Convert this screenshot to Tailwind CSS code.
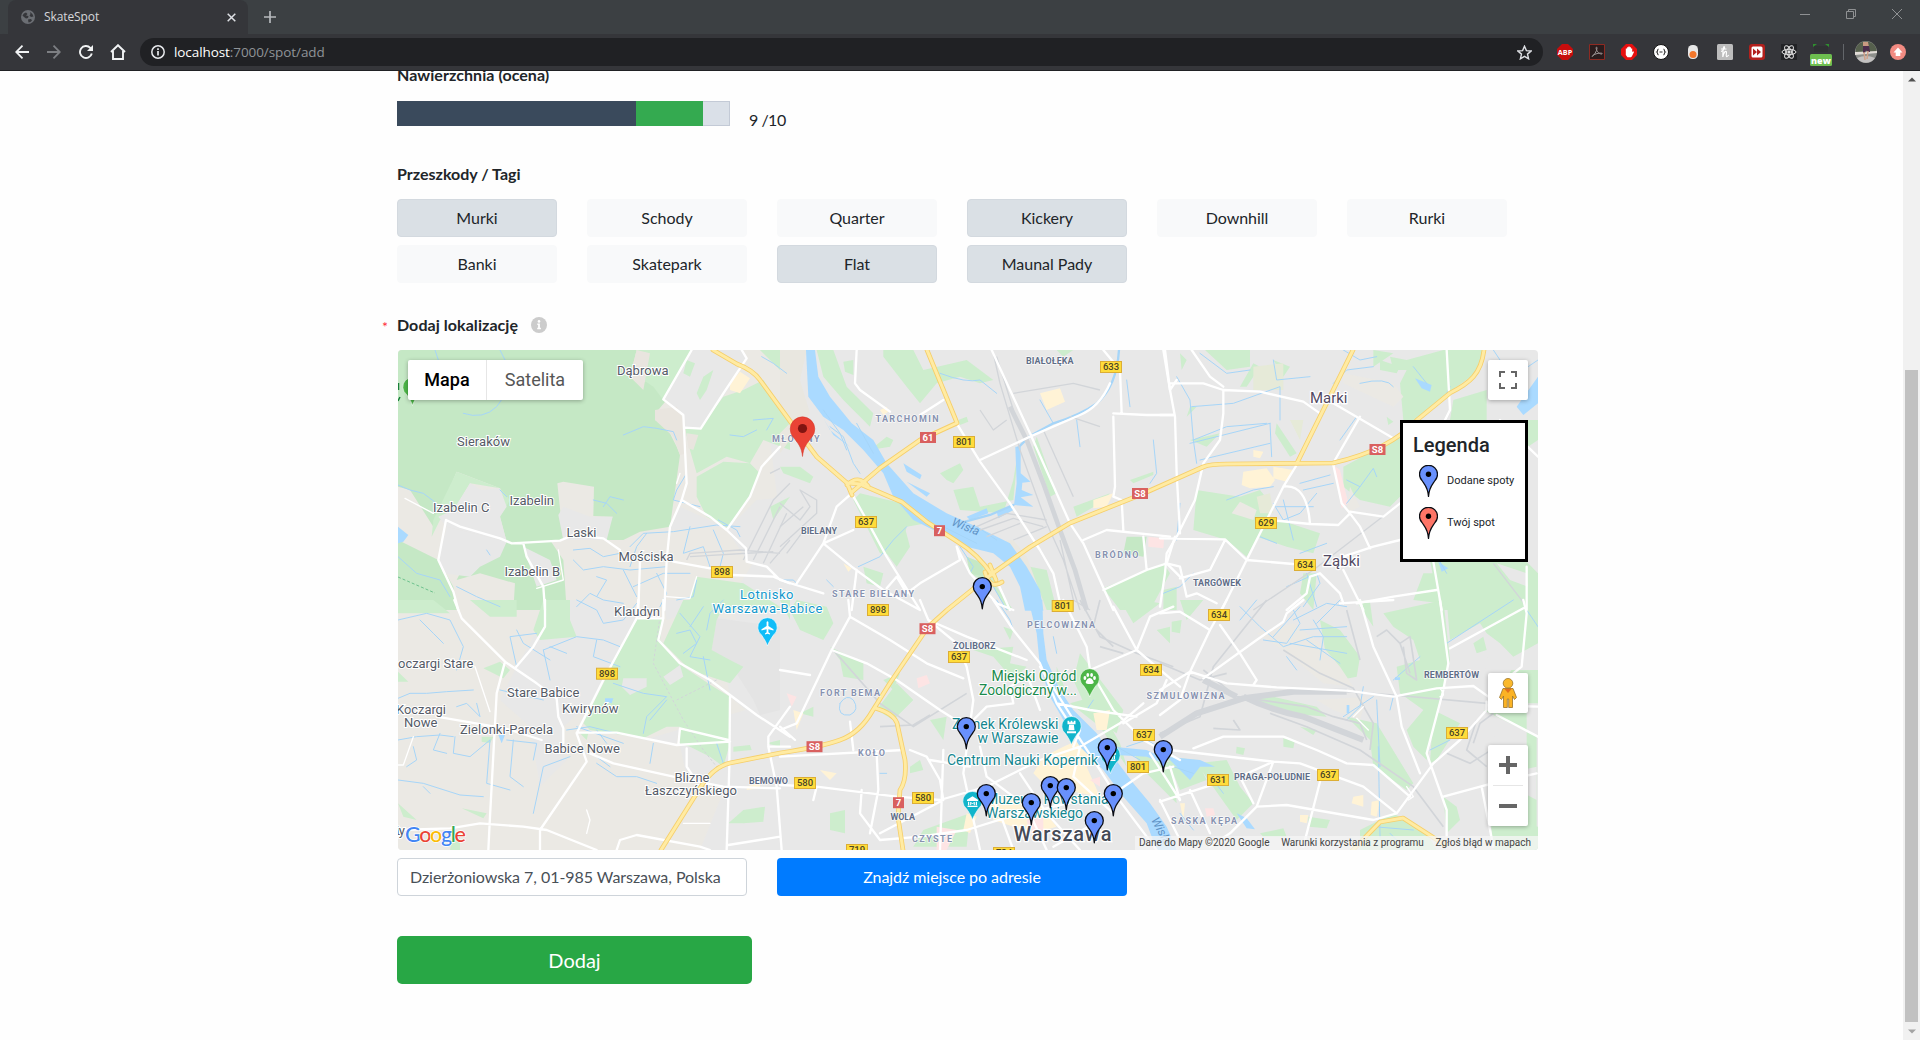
<!DOCTYPE html>
<html lang="pl">
<head>
<meta charset="utf-8">
<title>SkateSpot</title>
<script src="https://cdn.jsdelivr.net/npm/@tailwindcss/browser@4"></script>
</head>
<body class="flex h-[1040px] w-[1920px] flex-col overflow-hidden bg-[#fefefe] font-['Lato',sans-serif] text-base text-[#212529]">

<!-- Browser frame -->
<header class="flex h-[71px] shrink-0 flex-col border-b border-[#202124] bg-[#35363a] font-['Open_Sans',sans-serif]">
  <div class="flex h-[34px] items-stretch bg-[#3c4043]">
    <div class="w-2 rounded-br-md bg-[#3c4043]"></div>
    <div class="flex w-60 items-center rounded-t-lg bg-[#35363a] pl-[13px] pr-3">
      <svg class="size-[14px]" viewBox="0 0 14 14"><circle cx="7" cy="7" r="7" fill="#6b6e73"/><path d="M1.500 5.500Q2.500 3 5 2.500L6.500 4 5 5.500 7.500 6 7 8 5 8.500 3 7zM9 2q3 1.500 3.500 4.500L10 7 8.500 5.500 9.500 4zM7 9.500l3-.5 1 1.500Q9.500 12.500 7.500 12.500z" fill="#35363a"/></svg>
      <span class="ml-[9px] grow text-[12px] tracking-[-0.1px] text-[#d5d7da]">SkateSpot</span>
      <svg class="size-[9px]" viewBox="0 0 9 9"><path d="M.7.700l7.600 7.600M8.300.700L.7 8.300" stroke="#dfe1e5" stroke-width="1.500"/></svg>
    </div>
    <svg class="ml-4 size-3 self-center" viewBox="0 0 12 12"><path d="M6 0v12M0 6h12" stroke="#b6b9bd" stroke-width="1.700"/></svg>
    <div class="ml-auto flex items-start gap-[36px] pr-[18px] pt-[9px]">
      <svg class="size-[10px]" viewBox="0 0 10 10"><path d="M0 5.500h10" stroke="#8f9193"/></svg>
      <svg class="size-[10px]" viewBox="0 0 10 10" fill="none" stroke="#8f9193"><path d="M.5 2.500h7v7h-7zM2.500 2.500V.5h7v7h-2"/></svg>
      <svg class="size-[10px]" viewBox="0 0 10 10"><path d="M0 0l10 10M10 0L0 10" stroke="#8f9193"/></svg>
    </div>
  </div>
  <div class="flex h-9 items-center pl-[15px] pr-[14px]">
    <svg class="size-[14px]" viewBox="0 0 14 14" fill="none" stroke="#f1f3f4" stroke-width="1.800"><path d="M14 7H1.500M7.500.700L1.200 7l6.300 6.300"/></svg>
    <svg class="ml-[18px] size-[14px]" viewBox="0 0 14 14" fill="none" stroke="#7d7f83" stroke-width="1.800"><path d="M0 7h12.500M6.500.700L12.800 7l-6.300 6.300"/></svg>
    <svg class="ml-[18px] size-[14px]" viewBox="0 0 14 14"><path d="M12.800 8.500A6 6 0 1 1 11.300 2.800L12 3.500" fill="none" stroke="#f1f3f4" stroke-width="1.900"/><path d="M14 0v6H8z" fill="#f1f3f4"/></svg>
    <svg class="ml-[17px] size-4" viewBox="0 0 16 16" fill="none" stroke="#f1f3f4" stroke-width="1.900"><path d="M1 8l7-6.800L15 8M3 7v8h10V7"/></svg>
    <div class="ml-[14px] flex h-7 w-[1403px] items-center rounded-full bg-[#202124] pl-[11px] pr-[11px]">
      <svg class="size-[14px]" viewBox="0 0 14 14"><circle cx="7" cy="7" r="6.200" fill="none" stroke="#e8eaed" stroke-width="1.500"/><path d="M7 6v4.500M7 3.300v1.600" stroke="#e8eaed" stroke-width="1.700"/></svg>
      <span class="ml-[9px] grow text-[13.5px] tracking-[-0.08px] text-[#8f9397]"><span class="text-white">localhost</span>:7000/spot/add</span>
      <svg class="size-[15px]" viewBox="0 0 15 15"><path d="M7.500 1.200l1.900 4.400 4.700.4-3.600 3.100 1.100 4.700-4.100-2.500-4.100 2.500 1.100-4.700L.9 6l4.700-.4z" fill="none" stroke="#dfe1e5" stroke-width="1.400"/></svg>
    </div>
    <!-- Extensions -->
    <div class="ml-auto flex items-center gap-4">
      <svg class="size-4" viewBox="0 0 16 16"><path d="M5 0h6l5 5v6l-5 5H5l-5-5V5z" fill="#c70d0d"/><text x="8" y="10.700" text-anchor="middle" font-size="7.200" font-weight="700" fill="#fff">ABP</text></svg>
      <svg class="size-4" viewBox="0 0 16 16" fill="none"><path d="M.5.500h15v15H.5z" fill="#2a1c1d" stroke="#8e2a22"/><path d="M3 12.500c2-1 5-5.500 5-8.500 0-1.500-1.200-1-.8.800.7 3 3.300 5.500 5.800 5.200 1-.5-.5-1.200-3-.8-2.500.3-6 1.500-7 3.300z" stroke="#9b9494"/></svg>
      <svg class="size-4" viewBox="0 0 16 16"><path d="M5 0h6l5 5v6l-5 5H5l-5-5V5z" fill="#e60f0f"/><path d="M4.800 8V4.500h1.300V3.200h1.300v-.7h1.300v.7H10v1.200h1.200V8l1-.7.800.7-2.200 4.500-1 .8H6.500L4.800 11z" fill="#fff"/></svg>
      <svg class="size-4" viewBox="0 0 16 16"><circle cx="8" cy="8" r="7.500" fill="#fff" stroke="#111"/><path d="M5.500 5C4 5.500 5 7.500 3.800 8c1.200.5.200 2.500 1.700 3M10.500 5c1.500.500.500 2.500 1.700 3-1.200.5-.2 2.500-1.700 3M6.500 8h3" fill="none" stroke="#333" stroke-width="1.100"/></svg>
      <svg class="size-4" viewBox="0 0 16 16"><rect x="3" y="1" width="10" height="14" rx="4.500" fill="#e7e7e7"/><circle cx="8" cy="10.500" r="3.500" fill="#f4772b"/></svg>
      <svg class="size-4" viewBox="0 0 16 16"><rect width="16" height="16" rx="1.500" fill="#bdbdbd"/><path d="M4 7.500C6.500 7 8.500 3 7 2.500 5.800 2.500 6 8.500 5.800 13 6.500 9 8 7 9.200 7.500c1 .8-.7 4.500.3 5 .8.300 1.700-.8 2.200-1.500M4 5h5.500" fill="none" stroke="#fff" stroke-width="1.200"/></svg>
      <svg class="size-4" viewBox="0 0 16 16"><rect width="16" height="16" rx="3" fill="#b3201c"/><rect x="2.500" y="2.500" width="11" height="11" rx="1.500" fill="#fff"/><path d="M4 4.500L8 8l-4 3.500zM8 4.500L12 8l-4 3.500z" fill="#b3201c"/></svg>
      <svg class="size-4" viewBox="0 0 16 16" fill="none" stroke="#e5e5e5"><rect width="16" height="16" fill="#222326" stroke="none"/><ellipse cx="8" cy="8" rx="7" ry="2.700"/><ellipse cx="8" cy="8" rx="7" ry="2.700" transform="rotate(60 8 8)"/><ellipse cx="8" cy="8" rx="7" ry="2.700" transform="rotate(120 8 8)"/><circle cx="8" cy="8" r="1.200" fill="#e5e5e5"/></svg>
      <svg class="-mx-[3px] h-[22px] w-[22px] translate-y-[3px]" viewBox="0 0 22 22"><path d="M3 0h4L3 3zM19 0h-4l4 3z" fill="#2f8e2f"/><rect x="4" y="2" width="14" height="6" fill="#303134"/><rect y="10" width="22" height="12" rx="1.500" fill="#6dbe4f"/><text x="11" y="19.500" text-anchor="middle" font-size="9" font-weight="800" fill="#fff">new</text></svg>
    </div>
    <div class="ml-[14px] h-4 w-px bg-[#63666a]"></div>
    <svg class="ml-[11px] size-[22px]" viewBox="0 0 22 22"><circle cx="11" cy="11" r="11" fill="#8d8f8b"/><path d="M1 7a11 11 0 0 1 20 0l.5 4H.7z" fill="#56604d"/><path d="M2 17q9-4 18 0a11 11 0 0 1-18 0z" fill="#c3c1c1"/><path d="M0 11l22-1v2L0 14z" fill="#e2ddd8"/><path d="M8 1h5l1 5H8z" fill="#c99a82"/><path d="M8 5h6l1 6h-2l-2-2-1 3H8z" fill="#4b2d4c"/><path d="M9 11l1 8M13 10l-1 8" stroke="#d2a289" stroke-width="1.500"/></svg>
    <svg class="ml-[13px] size-4" viewBox="0 0 16 16"><circle cx="8" cy="8" r="8" fill="#f28b82"/><path d="M8 3.500l4.500 5h-2.200v3.500H5.700V8.500H3.500z" fill="#fff"/></svg>
  </div>
</header>

<div class="flex min-h-0 grow">
  <main class="min-w-0 grow overflow-hidden pl-[397px]">
    <h2 class="-mt-2 h-6 text-base leading-6 font-bold tracking-[0.06px]">Nawierzchnia (ocena)</h2>
    <div class="mt-[14px] flex h-[25px]">
      <div class="flex h-[25px] w-[333px] border border-[#c3cad6] bg-[#dae0e8]">
        <div class="-my-px -ml-px w-[239px] bg-[#3a4a5c]"></div>
        <div class="-my-px w-[67px] bg-[#34aa50]"></div>
      </div>
      <span class="ml-[19px] mt-[7px] h-6 leading-6 tracking-[-0.5px]">9 /10</span>
    </div>

    <h2 class="mt-9 h-6 leading-6 font-bold">Przeszkody / Tagi</h2>
    <div class="mt-[13px] grid w-[1110px] grid-cols-6 gap-x-[30px] gap-y-2 text-center leading-9 tracking-[-0.03px]">
      <div class="rounded border border-[#d3d9df] bg-[#dae0e5]">Murki</div>
      <div class="rounded border border-[#f8f9fa] bg-[#f8f9fa]">Schody</div>
      <div class="rounded border border-[#f8f9fa] bg-[#f8f9fa]">Quarter</div>
      <div class="rounded border border-[#d3d9df] bg-[#dae0e5]">Kickery</div>
      <div class="rounded border border-[#f8f9fa] bg-[#f8f9fa]">Downhill</div>
      <div class="rounded border border-[#f8f9fa] bg-[#f8f9fa]">Rurki</div>
      <div class="rounded border border-[#f8f9fa] bg-[#f8f9fa]">Banki</div>
      <div class="rounded border border-[#f8f9fa] bg-[#f8f9fa]">Skatepark</div>
      <div class="rounded border border-[#d3d9df] bg-[#dae0e5]">Flat</div>
      <div class="rounded border border-[#d3d9df] bg-[#dae0e5]">Maunal Pady</div>
    </div>

    <div class="-ml-[15px] mt-[30px] flex h-6 items-center leading-6">
      <span class="w-[15px] pt-[3px] text-[14px] text-[#ff2a3a]">*</span>
      <h2 class="font-bold tracking-[0.06px]">Dodaj lokalizację</h2>
      <svg class="ml-[13px] size-4" viewBox="0 0 16 16"><circle cx="8" cy="8" r="8" fill="#ccc"/><path d="M6.300 6.500h2.600v4.300h1v1.500H6.200v-1.500h.9V8h-.8z" fill="#fff"/><circle cx="8" cy="4.400" r="1.300" fill="#fff"/></svg>
    </div>

    <!-- Map -->
    <section class="relative ml-px mt-[13px] h-[500px] w-[1140px] overflow-hidden rounded bg-[#e8e8e8] font-['Roboto',sans-serif]">
      <svg id="map" class="block h-[500px] w-[1140px]" viewBox="398 350 1140 500">
        <defs>
          <g id="pin"><path d="M0 31.500C-.6 22-3.500 20-6.500 15.500A9 9 0 1 1 6.500 15.500C3.500 20 .6 22 0 31.500z" stroke="#0b0d14" stroke-width="1.300" stroke-linejoin="round"/><circle cy="9.300" r="2.700" fill="#000"/></g>
          <path id="poi" d="M0 28C-1 25-2 23-6 17A9.700 9.700 0 1 1 6 17C2 23 1 25 0 28z" stroke="#fff" stroke-width=".6"/>
        </defs>

        <!-- Land cover -->
        <path d="M398 350H790L770 440 780 520 730 600 760 700 700 850H398z" fill="#ebe9e4"/>
        <g transform="translate(390 340) scale(.33333)">
          <path d="M24 30H740L720 110 760 130 790 100 830 180 800 215 795 240 830 260 860 320 870 345 840 560 750 575 700 600 630 600 668 530 610 528 612 440 520 425 502 430 520 600 350 605 330 530 350 480 330 445 200 395 130 560 60 450 24 440z" fill="#c5e8c5"/>
          <path d="M200 395L330 445 240 430 180 530 150 540 125 590 130 540zM330 445L360 480 330 530z" fill="#cdedcd"/>
          <path d="M240 430L275 450 330 445 350 500 330 530 350 605 170 560 145 530 190 510zM505 525L520 500 600 530 668 530 650 600 520 600zM905 30H1060L1070 60 1000 170 930 265 885 265 880 225 820 180zM870 500L1000 560 840 570zM1100 480L1200 470V720L1070 660 1010 570z" fill="#e8e8e8"/>
          <path d="M24 600L145 660 190 740 200 810H24zM200 720L240 640 270 590 350 605 480 600 520 660 530 810H370L375 730 270 700z" fill="#c5e8c5"/>
          <path d="M170 560L350 605 330 650 270 680 240 710 160 700 145 660zM400 620L480 660 500 720 440 740z" fill="#e8e8e8"/>
          <path d="M740 30H905L820 180 790 140 730 100zM885 265L930 265 1000 170 1060 150 1120 120 1200 240V330L1120 300 1080 370 1010 350 920 400 900 330zM920 410L1000 365 1080 370 1110 400 1080 470 1015 565 950 530 920 470zM920 710L1060 730 1170 800V810H890zM1110 30H1200V120L1140 60zM1140 500L1200 470 1150 540z" fill="#cdedcd"/>
          <path d="M740 30L780 40 760 150 720 110zM795 210L860 200 885 250 890 340 870 345 850 290 795 240zM890 280L925 285 910 330 895 325z" fill="#e9e5df"/>
          <path d="M890 60L915 70 900 110 880 100zM940 110L970 90 950 150 930 180 920 160z" fill="#cdedcd"/>
          <path d="M1020 130L1050 95 1080 115 1050 160 1020 150z" fill="#fff3d6"/>
          <path d="M24 560L55 585 40 605 24 610z" fill="#aadaff"/>
        </g>
        <g transform="translate(780 340) scale(.33333)">
          <path d="M0 340L90 220 60 120 80 30H0z" fill="#e9e7e0"/>
          <path d="M0 200L30 250 0 280zM110 30H160L200 140 280 220 270 260 190 180 130 110zM310 30H400L430 90 560 60 640 120 600 130 540 110 470 130 420 190 380 140 310 50zM190 65L220 60V105L195 95zM270 330L320 290 340 300 330 320zM480 400L540 370 550 390 520 430 500 420zM520 450L580 440 600 500 700 480 715 330 700 420 670 520 540 510zM770 290L830 460 810 470 760 320zM880 500L990 460 960 490 890 530zM1050 420L1120 395 1120 405 1060 430zM535 240L560 230 565 245 540 255zM240 460L365 490 440 550 380 560 360 650 300 640 220 480zM560 650L630 680 650 740 700 810H680L640 740 570 700zM750 680L800 690 830 810H790zM970 745L1150 670 1170 700 1110 810H1020zM320 560L370 545 390 620 350 680 320 640zM250 680L310 700 300 740 260 730zM830 30H880L850 50zM0 380L60 380 100 410 90 430 10 400zM1150 750L1190 740V810H1150z" fill="#cdedcd"/>
          <path d="M1040 590L1100 590 1090 650 1030 640zM560 650L610 670 610 710 570 700z" fill="#c5e8c5"/>
          <path d="M780 160L840 145 855 185 800 210zM940 480L1000 460 980 500 940 505zM300 210L320 200 325 215 310 225zM190 670L215 685 205 695z" fill="#fff3d6"/>
          <path d="M1105 590L1150 595 1150 625 1105 620z" fill="#fde4e4"/>
          <path d="M600 610L690 620 740 690 790 810H800L740 650 700 600z" fill="#e9e7e0"/>
        </g>
        <g transform="translate(1160 340) scale(.33333)">
          <path d="M850 30H975L960 90 870 155 770 240 730 240 720 130 740 90 700 90 690 50 740 60zM660 60L720 80 710 100 660 90zM135 30H270V80L200 90zM550 380L720 290V470L690 500 600 480 550 440zM110 450L240 470 300 450 340 500 260 650 200 600 100 570zM300 520L480 580 460 640 380 620 290 590zM810 662L1100 665 1134 700V810H840zM880 180L980 150 980 240H870zM240 140L260 140 300 80 280 70zM350 250L410 340 390 350 345 280zM340 60L390 80 370 110zM60 40L80 60 65 90zM430 700L470 700 460 810 420 760zM1040 240H1134V300L1104 320V240zM640 30L700 40 640 80zM90 200L110 200 80 230zM90 300L180 280 140 320zM680 230L700 245 685 255zM790 700L830 700 840 790 760 780z" fill="#cdedcd"/>
          <path d="M250 395L320 385 345 420 330 440 270 445 245 435zM340 380L400 390 380 425 340 415zM280 330L310 335 300 355 280 350z" fill="#fff3d6"/>
          <path d="M280 80L370 70 370 150 280 150zM290 470L330 460 340 520 300 520zM390 240L430 240 420 300z" fill="#e6ead8"/>
          <path d="M520 375L540 390 565 490 545 505zM0 595L12 598 10 620 0 622z" fill="#fde4e4"/>
          <path d="M215 520L240 485 290 510 280 540zM550 100L700 130 730 170 700 200 550 130zM570 440L600 500 560 520z" fill="#ebe9e4"/>
          <path d="M1010 670L1100 700 1104 740 1050 720z" fill="#e8e8e8"/>
        </g>
        <g transform="translate(390 600) scale(.33333)">
          <path d="M500 0H670L740 55 690 140 620 290 500 400 530 480 450 560 420 380 330 300 380 200 430 110zM860 390L1170 300V750H1010L1000 560 890 530zM400 330L500 300 520 420 460 430zM820 0L880 0 860 50 830 60zM980 50L1100 70 1170 140V330L1080 340 1020 290z" fill="#e8e8e8"/>
          <path d="M980 55L1170 80V330L1110 345 1090 300 1020 190 965 150z" fill="#e4e4e4"/>
          <path d="M740 55H820L810 120 880 200 970 260 1020 290V430L1000 500 960 470 900 440 865 430 870 380 830 380 760 415 600 390 580 370 650 230zM880 0H1010L980 60 965 150 1020 180 1060 200 1020 250 900 210 820 130zM460 0H540V60L560 110 450 120 430 90zM240 0H380V50H300zM24 0H130L180 40H24zM280 205L330 185 360 210 340 235zM24 215L55 245H24zM1060 630L1125 620 1120 665 1060 670 1015 670zM190 700H210V750H180zM570 400L595 400 590 420zM1030 440L1080 435 1085 450 1030 455zM24 610L80 660 40 650zM215 625L290 640 280 655zM1130 430L1170 420V440zM275 410L310 410 300 430 275 425zM1170 0H1200V60z" fill="#cdedcd"/>
          <path d="M700 235L770 235 770 260 720 285 695 260zM820 230L870 195 880 230 840 255zM760 420L865 390 860 430z" fill="#e8e8e8"/>
          <path d="M1070 560L1110 545 1110 565 1070 570z" fill="#fff3d6"/>
          <path d="M325 405L345 405 335 430zM645 295L670 295 665 310 645 305z" fill="#aadaff"/>
        </g>
        <g transform="translate(780 600) scale(.33333)">
          <path d="M50 0L140 20 160 70 130 120 60 90 30 30zM150 140L250 190 250 240 190 230 180 180zM290 330L350 250 400 300 340 360zM580 150L700 140 690 190 740 200 700 240 640 170zM870 310L940 290 1020 430 1040 500 960 380zM900 160L1030 330 1010 400 930 350 880 240zM670 80L700 90 690 120zM1090 0L1140 10 1060 70 1020 0zM390 500L420 480 430 510 390 520zM150 640L195 630 195 700 150 690zM540 650L570 640 560 740H400L430 690zM1060 460L1180 490 1190 610 1100 520zM450 360L500 350 490 420zM830 200L860 280 830 250zM60 340L100 320 100 350zM1130 90L1170 80V130zM310 240L360 220 340 270z" fill="#cdedcd"/>
          <path d="M850 440L940 400 990 470 920 500 960 590 800 560 760 520 790 470zM620 590L760 590 830 680 760 700 640 660zM120 510L170 520 150 540zM560 640L590 650 570 700 550 690zM940 340L990 330 980 390 950 390zM40 330L70 340 50 390z" fill="#fff3d6"/>
          <path d="M410 235L440 225 450 250 415 265zM470 680L530 690 500 750H470zM930 540L960 530 960 560zM20 280L50 290 35 320zM740 660L790 650 790 700 750 700z" fill="#fde4e4"/>
        </g>
        <g transform="translate(1160 600) scale(.33333)">
          <path d="M670 40L850 0 870 180 830 340 800 480 760 440 740 390 790 330 720 280 710 200 780 180 760 120 700 80zM860 0H1134V130L1060 170 1020 130 980 100 960 70 870 120zM940 130L970 110 980 150 950 160zM1060 210H1134V310L1010 310 980 270 1000 210zM560 350L650 370 760 550 740 570 640 500 630 420zM110 490L200 480 240 560 280 610 230 660 180 590zM850 590L890 620 900 660 860 700zM480 60L540 90 600 170 590 230 540 240 500 180zM20 470L110 480 140 540 60 570zM280 290L340 290 470 320 500 350 380 340 320 320zM370 415L405 420 400 445 370 440zM820 330L900 370 830 480 810 490zM600 690L700 640 800 700 830 750H600zM300 700L370 685 380 710H310zM445 650L510 660 500 685 445 680zM60 0H130L80 60zM35 65L65 60 60 100 35 95zM970 330L1130 410V680H1100V330zM420 380L470 390 460 405zM230 440L255 445 250 465 228 460zM590 0L630 5 640 80 600 20zM990 640L1134 680V750H1000z" fill="#cdedcd"/>
          <path d="M980 170L1060 200 1000 300 930 330 970 280zM880 400L980 340 1010 400 960 470 880 450zM1000 530L1130 500 1130 600z" fill="#e8e8e8"/>
          <path d="M290 100L400 70 480 130 540 200 580 260 490 250 370 150zM470 300L620 290 600 360 520 330z" fill="#ebe9e4"/>
          <path d="M580 590L610 585 610 620 575 610zM635 605L660 600 650 650 632 645zM60 610L75 610 70 660zM420 645L445 645 440 670 420 665z" fill="#fff3d6"/>
          <path d="M135 625L160 625 165 645 140 650z" fill="#fde4e4"/>
        </g>

        <!-- Vistula and canals -->
        <g fill="#aadaff">
          <path transform="translate(780 340) scale(.33333)" d="M78 30H105L115 110 150 170 215 250 280 300 320 370 400 460 500 520 590 560 690 610 740 680 780 750 790 812H735L720 740 690 680 640 640 560 620 480 580 400 540 340 470 310 400 250 330 190 270 130 230 85 170zM370 370L425 405 420 418 380 395zM130 235L160 285 210 320 150 270zM560 530L620 505 625 520 570 540zM650 515L690 500 700 510 655 535zM380 425L450 460 440 470zM706 320L722 320 722 400 752 425 727 428 725 450 760 465 722 472 760 500 702 495 710 430z"/>
          <path transform="translate(780 600) scale(.33333)" d="M745 -1H787L790 100 800 180 840 270 880 330 950 400 1000 470 1060 550 1110 610 1160 680 1190 750H1130L1100 670 1030 590 970 510 900 440 850 360 810 290 780 200 770 100zM1000 440L1100 450 1160 480 1150 490 1100 470 1010 465z"/>
          <path transform="translate(1160 600) scale(.33333)" d="M20 470L120 480 165 500 120 500 90 540 60 510zM230 640L260 655 285 688 260 685zM0 670L20 690 0 710zM560 315h8v25h-8zM705 232h15v8h-15z"/>
          <path transform="translate(1160 340) scale(.33333)" d="M765 115L815 135 810 155 785 145zM1070 200L1134 110V190L1090 225zM835 665L865 685 845 695z"/>
        </g>
        <g fill="none" stroke="#a6d5f8" stroke-width="3" stroke-linejoin="round" stroke-linecap="round">
          <path transform="translate(390 340) scale(.33333)" d="M220 220Q280 240 320 200L345 165M330 30L345 60M700 285L760 260 800 265 850 275 860 300M1020 285L1060 290 1100 270M1090 240L1150 235 1130 270M1115 50L1150 70 1190 100M24 435L60 450 100 460 140 490M135 30L145 60M24 650L80 700 150 720 180 770M610 480L650 490 680 520M640 500L660 470 700 480M720 620L760 580 850 575 980 555 1050 560M550 630L600 625 640 650 690 640M550 660L580 690 640 680 720 690 830 680M620 710L650 720 620 770M770 580L740 620 720 680M900 560L880 640 940 620 960 680M970 570L1000 640 990 680M890 400L860 450 850 480 930 500M560 800L600 760 640 780 700 790M700 690L740 770M800 700L830 760 810 800M730 740L820 700 900 700M985 540L1040 570 1050 590M920 720L910 770 860 780M200 740L260 770 330 800M290 630L300 645M330 450L350 470"/>
          <path transform="translate(780 340) scale(.33333)" d="M480 100Q560 130 600 120L650 160M130 210L180 280 200 330M230 250L280 340M150 260L190 290 220 370 240 400M780 180L820 250M890 240L900 320M1150 30L1160 70M1040 120L1050 200M1120 300L1130 400 1110 430M235 680L300 650 340 600 380 560M540 620L580 680 570 700M490 560L590 610M590 560L650 600M0 720L40 720 60 740M140 720L160 740M640 740L680 810"/>
          <path stroke-width="7" transform="translate(780 340) scale(.33333)" d="M1017 30Q1010 140 950 190 900 225 820 250L750 288 715 322M700 495L630 525 520 555"/>
          <path transform="translate(1160 340) scale(.33333)" d="M120 40L200 100 270 90M50 110L90 180 100 300 200 260 320 250M95 200L220 190 360 140 360 240M340 60L350 120 450 110M550 30L600 60 650 50M520 130L560 90 640 80M600 130Q680 110 700 140M90 310L330 250M120 360L330 310M330 250L335 350M100 300L110 370M540 300L590 230M340 490L370 540 420 520 470 460M370 480L400 600M350 500L460 500M300 590L350 610M420 430L510 405M430 450L520 430M560 420L600 440 640 385 650 410M600 440L560 490M200 480L280 450 340 440M60 490L50 600M420 640L500 610M380 740L470 700 480 730 430 800M440 700L470 800M760 80L800 130M1000 30L1020 60 1000 90M1134 60L1060 110M100 700L60 740 10 760M850 180L870 140M860 700L840 665"/>
          <path transform="translate(390 600) scale(.33333)" d="M24 60L110 40 180 60 220 140 200 210M90 60L130 100 160 130M24 295L60 280 110 280 170 275 250 270M200 320L230 310 270 350 260 310M24 420L80 410 150 405 190 410M70 440L80 480 50 500M150 400L130 450 170 460M195 410L190 460 240 470 300 420M300 420L290 550 360 570M370 420L360 530 400 560M350 420L440 430 430 480M560 0L620 30 640 70 700 60 740 10M460 150L560 110 640 120 690 140M480 140L530 160M380 90L400 130 480 180M620 120L610 170 690 200M380 200L360 110 440 100M460 150L480 240M530 390L600 380 680 400M540 470L460 500 430 640M24 540L100 550 210 585 280 590M100 560L120 580M620 490L680 530 740 530 800 550M620 470L660 500M790 430L780 490M860 100L900 90 920 130 880 160M870 40L930 110 900 170 960 180M940 20L900 80M1000 0L960 40 950 90M670 250L760 280 830 290 770 350 760 400M620 390L650 430M940 170L960 270M830 300L780 360M980 430L1000 490M560 380L700 430M330 270L460 300"/>
          <path transform="translate(780 600) scale(.33333)" d="M180 310Q170 350 210 345 240 330 220 300 200 280 180 310M650 0L690 60 700 90M300 520L320 520M1010 440L1080 480M1040 440L1100 420 1150 450M820 110L830 160M940 300L920 330"/>
          <path transform="translate(1160 600) scale(.33333)" d="M240 20L300 80 370 140 460 110 560 110M310 120L380 130 420 70 400 30M400 60L500 10 560 20M420 90L560 80M460 60L490 110 480 180M390 130L560 160M470 70L540 0M440 120L540 190M240 60L290 0M380 170L410 210M340 110L420 20M550 350L640 290M560 360L600 320 610 260M700 290L690 330M650 300L660 500M655 440L660 710M810 450L870 420M160 540L190 580M780 170L700 240M1100 30L1134 80M40 500L100 520M60 640L100 690M640 680L760 690M690 700L730 740M860 130L1060 0"/>
        </g>

        <!-- Railways -->
        <g fill="none" stroke="#d2d5d9" stroke-linejoin="round">
          <path stroke-width="14" transform="translate(780 340) scale(.33333)" d="M690 200L740 300 790 430 840 570 885 690 920 810"/>
          <path stroke-width="4" transform="translate(780 340) scale(.33333)" d="M640 40L660 130 720 330 800 550 850 660 900 810M650 50L700 210M840 600L880 780 930 810M590 560L680 520 800 540M600 570L700 535 790 560M620 590L720 550M700 600L800 560M0 490L60 540 90 500 60 450 110 480 110 520 0 620M20 640L80 560M700 160L880 130 960 150M870 230L960 260M790 270L880 470M600 210L640 270 680 240M0 560L70 500"/>
          <path stroke-width="4" transform="translate(390 340) scale(.33333)" d="M890 660L900 640 1050 630 1170 640M900 650L1150 635M1060 660L1150 480 1200 430M1090 660L1170 500M1120 670L1190 520M1200 600L1140 670M1140 400L1170 385"/>
          <path stroke-width="18" transform="translate(1160 600) scale(.33333)" d="M0 410L110 340 250 295 400 275 560 275M130 240L230 290M250 290Q330 330 430 350L560 400 610 420"/>
          <path stroke-width="5" transform="translate(1160 600) scale(.33333)" d="M560 275L700 285 980 310M370 150L480 220 580 265 640 370 630 450M0 400L120 350 160 200 320 0M130 210L230 290 440 320 520 350 600 370 620 420M330 340L440 380 600 450 760 560 850 680M650 110L680 90 720 130 750 110 770 240 740 220 730 140M720 130L750 220M0 190L120 240 200 220M560 30L600 180M160 385L240 390 220 360M940 430L960 370 1000 340M860 460L930 490 1010 440M950 360L920 450 980 500"/>
          <path stroke-width="4" transform="translate(1160 340) scale(.33333)" d="M720 490L460 690 280 810M1000 670L1100 800"/>
          <path stroke-width="5" transform="translate(780 600) scale(.33333)" d="M900 0L960 110 1070 160 1180 200M960 0L940 80 1000 140M160 150L300 310 400 380 560 280M300 380L400 375 450 345M1030 160L960 140"/>
          <path stroke-width="3" stroke-dasharray="8 6" transform="translate(390 600) scale(.33333)" d="M810 50L790 190 880 360 940 450 980 500M860 300L980 240"/>
        </g>

        <!-- Streets -->
        <g fill="none" stroke="#fff" stroke-width="7" stroke-linejoin="round" stroke-linecap="round">
          <path transform="translate(390 340) scale(.33333)" d="M905 30L820 178 880 225 890 430 875 480 840 560 830 660 823 810M885 263L932 266 1000 160 1070 55 1055 30M875 480L960 530 1010 570 1068 625 1070 665 1130 680 1165 715M1010 570L1080 470 1115 380 1170 320M168 540L210 560 330 595 365 610 510 602 550 585 640 595 690 630M168 540L145 660 190 755 205 810M365 610L400 610 410 650 460 740 465 810M850 665L960 685M1025 705L1150 710 1200 730M750 665L745 810"/>
          <path transform="translate(390 340) scale(.33333)" stroke-width="4" d="M45 475L130 520M505 630L520 720 440 745M860 430L870 400M830 770L900 775 920 710"/>
          <path transform="translate(780 340) scale(.33333)" d="M230 30L225 130 240 150 330 215M420 225L490 180M530 250L600 365 690 490 780 630 820 700 845 810M635 30L690 150 750 280 870 550 910 610 1000 810M600 360L750 290 900 225Q960 200 990 130M1000 220L1100 225 1180 225M1000 230L1005 440 1000 470 1025 480 1030 570M970 30L1020 90 1025 220M1155 30L1170 150 1190 120M910 600L980 570 1170 590M1185 590L1160 670 1100 690 970 750M1090 590L1100 690M215 460L260 540 320 650 420 810M215 460L170 500 130 610 50 730M130 610L220 570M130 610L215 680 310 750 420 810M530 620L540 660 420 730 380 760M530 620L570 700 650 790 700 810M640 700L690 810M230 690L215 810M0 720L130 760M320 745L350 710 380 760M1160 670L1200 710"/>
          <path transform="translate(1160 340) scale(.33333)" d="M10 30L30 150 45 230 50 400 60 580M30 130L130 130 190 150 190 220 180 300 130 370 105 480 50 590 20 640 15 700 0 800M95 30L150 110 190 140M190 150L300 155 430 185 480 220M520 190L700 295M600 230L525 360M410 375L370 440 260 660 185 810M370 440Q440 430 450 550M520 375L545 490 570 520 535 555 450 552 330 540M570 520L600 560 630 625M570 515L670 530 720 490M0 595L195 598 260 660 400 672M550 650L640 620 720 600M480 700L450 710 440 760 380 810M480 700L540 760 550 790M550 690L610 810M20 670L60 680 80 770 110 760 170 790M195 600L150 690 60 715M590 790L700 770 830 750M820 665L845 810M860 30L870 210 855 240M1020 240L1134 350M1100 680V810M0 225L40 225"/>
          <path transform="translate(390 600) scale(.33333)" d="M193 0L215 55 345 185 440 250 500 295 505 350 520 385V430M345 185L320 280 300 650 295 750M375 205L430 140 465 80V0M745 0L740 55 640 240 560 400 590 485 450 690V750M745 55H820V0M820 55L805 120 870 190 960 240 1100 345 1200 410M560 398L680 398 860 435 1020 425M140 350L345 385 455 420M600 460L670 490 850 530 1000 560 1170 565M1020 290L1018 500 1010 750M24 690L180 685 270 670 400 680 470 690 620 750M680 750L690 720 740 705 930 740 960 750M865 435L870 385 1015 420M890 445V500L910 530M1135 440L1160 560 1175 750M1135 440L1135 410 1200 320M1015 735L1170 710M1140 440H1200"/>
          <path transform="translate(390 600) scale(.33333)" stroke-width="4" d="M70 410L40 495H24M255 200L300 335M590 630L600 660 590 700M880 670H960"/>
          <path transform="translate(780 600) scale(.33333)" d="M205 0L210 50 155 150 50 370 0 390M420 0L445 60 560 110 740 180M640 0L700 90 780 190 830 310 960 510 1010 590 1130 750M210 50L330 120 440 190 550 235M155 150L260 190 350 240 480 330 560 380M445 60L530 130 560 200 580 300 550 520 600 750M580 360L620 320 700 310 690 260 740 230M740 220L780 330M0 380L45 420M0 210L90 225M0 470L370 450M390 450L440 470 480 540 490 600M210 365L220 450M290 460L295 570 270 700M0 555L110 560 350 590 480 600 620 560M110 560L100 600M300 700L490 600M620 560L780 480 900 440 1020 370 1090 310M300 720L420 710 560 690 720 640M245 570L240 640 300 720M600 440L620 530 740 620 800 750M830 310L930 330 1070 350M1070 150L930 210 1000 330 1090 420 1200 480M1070 150L1000 20M850 0L920 140 930 210M1070 150L1110 50 1180 20M1070 150L1200 260M780 200L900 390 880 440M740 640L900 600 960 610 1090 520 1180 500M620 560L660 640 700 750M490 450L480 750M900 440L880 530 1000 640M570 500L450 480M720 520L800 640 900 750M820 740L960 660M1110 460L1200 600M1030 370L1130 310 1160 240"/>
          <path transform="translate(1160 600) scale(.33333)" d="M200 0L150 90 90 215 0 270M90 215L200 250 350 262 560 272 700 290M700 290L830 265 940 258 985 290M180 75L240 160 290 240 280 255M130 235L290 120 370 65 380 40 430 0M0 40L60 35 150 90M90 215L60 300 0 345M600 0L640 140 710 290 725 380 780 520M540 10L700 0M840 0L865 190 850 270 800 460 860 630V710M870 145L1090 25M1090 0L1100 40 1085 200 1060 220M980 305V330L900 420 820 490 710 640M980 315L1134 320M1010 345L1134 410M30 450L340 485 420 490 610 560 710 640 640 660 380 615 290 620 210 700 150 740M340 485L290 620M340 485L240 530 280 610M100 445L190 410 370 410 470 450 560 490 640 495 750 590M0 605L170 550M480 545L430 740M30 500L60 600M90 570L150 700M0 600L70 740M850 590L980 555 1130 520M965 560L1000 740"/>
          <path transform="translate(1160 600) scale(.33333)" stroke-width="4" d="M580 350L610 320M590 355L625 390M740 560L760 590 745 600M840 265Q860 290 840 290"/>
        </g>

        <!-- Trunk roads -->
        <g fill="none" stroke-linejoin="round" stroke-linecap="round">
          <g id="trunk" stroke="#f6cf6b" stroke-width="4.700">
            <path d="M713 350L737 364Q753 370 760 380L790 421 817 457 847 483 860 484 902 502 927 522 958 542Q978 554 992 575"/>
            <path d="M927 350L955 418 957 423 920 440 880 468 852 492M847 483L852 495M847 485Q858 474 868 486"/>
            <path d="M1484 350C1481 374 1470 383 1450 393L1417 420Q1390 450 1333 463L1227 464Q1210 464 1203 467L1140 495 1070 523 1030 547 993 573 947 610 928 627 890 683 873 710Q860 733 840 740T780 753L730 763Q713 767 700 788L661 850"/>
            <path d="M1353 350L1297 463M990 565L996 580M985 572Q990 590 1002 582"/>
            <path d="M875 708Q893 713 897 723L905 760Q907 780 900 790L898 817 903 850M1350 853L1380 822 1403 818 1445 845"/>
          </g>
        </g>
        <g id="trunkfill" fill="none" stroke="#ffeba3" stroke-width="3" stroke-linejoin="round" stroke-linecap="round"></g>
        <path d="M398 577L435 593" stroke="#57b87f" stroke-width=".8" stroke-dasharray="3 2"/>
        <g id="labels"></g>
        <g id="shields"></g>
        <g id="places"></g>
        <g id="pins"></g>

        <!-- Google wordmark -->
        <text x="405" y="841.500" class="text-[21.5px] font-medium font-['Lato',sans-serif] stroke-white stroke-[1.5px] [paint-order:stroke]" textLength="61"><tspan fill="#4285f4">G</tspan><tspan fill="#ea4335">o</tspan><tspan fill="#fbbc05">o</tspan><tspan fill="#4285f4">g</tspan><tspan fill="#34a853">l</tspan><tspan fill="#ea4335">e</tspan></text>
      </svg>

      <!-- Map controls -->
      <div class="absolute left-[10px] top-[10px] flex h-10 w-[175px] items-center rounded-xs bg-white text-center text-[18px] leading-10 shadow-[0_1px_4px_rgba(0,0,0,.3)]">
        <span class="w-[79px] border-r border-[#e6e6e6] font-medium text-black">Mapa</span>
        <span class="w-24 text-[#565656]">Satelita</span>
      </div>
      <div class="absolute right-[10px] top-[10px] flex size-10 items-center justify-center rounded-xs bg-white shadow-[0_1px_4px_rgba(0,0,0,.3)]">
        <svg class="size-[18px]" viewBox="0 0 18 18"><path d="M1 6V1h5M12 1h5v5M17 12v5h-5M6 17H1v-5" fill="none" stroke="#666" stroke-width="2"/></svg>
      </div>
      <div class="absolute right-[10px] top-[70px] h-[142px] w-32 border-[3px] border-black bg-white pl-[10px] pt-[10px]">
        <h3 class="h-[24px] text-[20px] leading-6 font-medium">Legenda</h3>
        <div class="mt-2 flex h-8 items-center">
          <svg class="ml-[6px] h-8 w-[19px] shrink-0" viewBox="-9.500 0 19 32"><use href="#pin" fill="#6991fd"/></svg>
          <span class="ml-[9px] -mt-[1px] text-[11px] leading-4 whitespace-nowrap">Dodane spoty</span>
        </div>
        <div class="mt-[10px] flex h-8 items-center">
          <svg class="ml-[6px] h-8 w-[19px] shrink-0" viewBox="-9.500 0 19 32"><use href="#pin" fill="#fd7567"/></svg>
          <span class="ml-[9px] -mt-[1px] text-[11px] leading-4 whitespace-nowrap">Twój spot</span>
        </div>
      </div>
      <div class="absolute right-[10px] top-[323px] flex size-10 items-center justify-center rounded-xs bg-white shadow-[0_1px_4px_rgba(0,0,0,.3)]">
        <svg class="h-[30px] w-[18px]" viewBox="0 0 18 30"><path d="M4 10.500h10l3.500 9-2 2L13.500 18v11.500H9.700V21H8.300v8.500H4.500V18l-2 3.500-2-2z" fill="#fbb325" stroke="#9a7428" stroke-width=".8"/><path d="M5 10.500h8L9 15z" fill="#e2711d"/><circle cx="9" cy="5.300" r="4.800" fill="#fbb92c" stroke="#9a7428" stroke-width=".8"/></svg>
      </div>
      <div class="absolute right-[10px] top-[395px] flex h-[81px] w-10 flex-col items-center rounded-xs bg-white shadow-[0_1px_4px_rgba(0,0,0,.3)]">
        <svg class="my-[11px] size-[18px] shrink-0" viewBox="0 0 18 18"><path d="M9 0v18M0 9h18" stroke="#666" stroke-width="4"/></svg>
        <div class="h-px w-[30px] bg-[#e6e6e6]"></div>
        <svg class="my-[11px] size-[18px] shrink-0" viewBox="0 0 18 18"><path d="M0 9h18" stroke="#666" stroke-width="4"/></svg>
      </div>
      <div class="absolute bottom-0 right-0 flex h-[14px] w-[403px] justify-between bg-[#f5f5f5]/75 pl-[4px] pr-[7px] text-[10px] leading-[14px] whitespace-nowrap text-[#444]">
        <span>Dane do Mapy ©2020 Google</span>
        <span>Warunki korzystania z programu</span>
        <span>Zgłoś błąd w mapach</span>
      </div>
    </section>

    <div class="mt-2 flex gap-[30px]">
      <div class="h-[38px] w-[350px] rounded border border-[#ced4da] bg-white px-3 leading-9 tracking-[-0.05px] text-[#495057]">Dzierżoniowska 7, 01-985 Warszawa, Polska</div>
      <div class="h-[38px] w-[350px] rounded bg-[#007bff] text-center leading-[38px] tracking-[-0.05px] text-white">Znajdź miejsce po adresie</div>
    </div>
    <div class="mt-10 h-12 w-[355px] rounded-[5px] bg-[#28a745] text-center text-[20px] leading-[49px] text-white">Dodaj</div>
  </main>

  <!-- Page scrollbar -->
  <div class="flex w-[17px] flex-col items-center bg-[#f1f1f1]">
    <svg class="mt-[6px] h-[5px] w-[8px]" viewBox="0 0 8 5"><path d="M4 .5L8 4.500H0z" fill="#505050"/></svg>
    <div class="mt-[288px] h-[652px] w-[13px] bg-[#c1c1c1]"></div>
    <svg class="mt-[7px] h-[5px] w-[8px]" viewBox="0 0 8 5"><path d="M4 4.500L8 .5H0z" fill="#a3a3a3"/></svg>
  </div>
</div>

<script>
  const $ = id => document.getElementById(id);
  $('trunkfill').innerHTML = $('trunk').innerHTML;

  // Label styles: town, large town, district, quarter, airport, park, museum
  const styles = {
    v: 'text-[13px] fill-[#555b67] stroke-white stroke-[2px] [paint-order:stroke]',
    V: 'text-[15px] fill-[#524a63] stroke-white stroke-[2.5px] [paint-order:stroke]',
    d: 'text-[9px] font-bold fill-[#5f6d87] stroke-white stroke-[1.2px] [paint-order:stroke]',
    q: 'text-[9px] font-bold fill-[#8792b0] stroke-white stroke-[1.2px] [paint-order:stroke]',
    a: 'text-[13px] fill-[#1298cc] stroke-white stroke-[2px] [paint-order:stroke]',
    g: 'text-[14px] fill-[#1a8a4c] stroke-white stroke-[2px] [paint-order:stroke]',
    t: 'text-[14px] fill-[#14868f] stroke-white stroke-[2px] [paint-order:stroke]',
    W: 'text-[20px] font-medium fill-[#454b57] stroke-white stroke-[2.5px] [paint-order:stroke]'
  };
  // [text, style, left, right, baseline]
  const labels = [
    ['Dąbrowa','v',617,668.5,374.7],['Sieraków','v',457,510,445.7],['Izabelin C','v',433,489.5,511.7],['Izabelin','v',509.5,554,504.7],
    ['Laski','v',566.5,596.500,536.7],['Mościska','v',618.5,673.5,561],['Izabelin B','v',504.5,560,576],['Klaudyn','v',614,660,615.7],
    ['oczargi Stare','v',398,473.5,667.7],['Stare Babice','v',507,579.5,696.7],['Kwirynów','v',562,618.500,713],['Koczargi','v',396,446,713.7],
    ['Nowe','v',404,437.5,727],['Zielonki-Parcela','v',460,553,733.7],['Babice Nowe','v',544.5,620,752.7],['Blizne','v',674.5,709.5,781.7],
    ['Łaszczyńskiego','v',645,737,794.7],['ty','v',396,405,835],
    ['Marki','V',1310,1347.5,402.7],['Ząbki','V',1323,1360,566],
    ['BIAŁOŁĘKA','d',1026,1073.5,364],['BIELANY','d',801,837,534],['BEMOWO','d',749,788,783.7],['ŻOLIBORZ','d',953,995.5,649],
    ['WOLA','d',890.5,915,819.7],['TARGÓWEK','d',1193,1241,586],['REMBERTÓW','d',1424,1479,677.7],['PRAGA-POŁUDNIE','d',1234,1310,780],
    ['MŁOCINY','q',772,819.5,442],['TARCHOMIN','q',875.5,938.5,422],['BRÓDNO','q',1095,1138.5,557.7],['STARE BIELANY','q',832,914,596.7],
    ['PELCOWIZNA','q',1027,1095,627.7],['FORT BEMA','q',820,880,695.7],['SZMULOWIZNA','q',1146.5,1224.5,699],['KOŁO','q',858,885,755.7],
    ['CZYSTE','q',912,952,841.7],['SASKA KĘPA','q',1171,1237,823.7],
    ['Lotnisko','a',740,793.5,599],['Warszawa-Babice','a',712.5,822.5,612.7],
    ['Miejski Ogród','g',991.5,1076.5,681],['Zoologiczny w...','g',979,1077,695],
    ['Zamek Królewski','t',952,1058.5,729],['w Warszawie','t',977.5,1058.5,743],['Centrum Nauki Kopernik','t',947,1098,765],
    ['Muzeum Powstania','t',986,1108.5,804],['Warszawskiego','t',986,1083,818],['Warszawa','W',1013.5,1111.5,841]
  ];
  $('labels').innerHTML = labels.map(([s, k, l, r, y]) =>
    `<text x="${l}" y="${y}" textLength="${r - l}" class="${styles[k]}">${s}</text>`).join('') +
    '<text transform="translate(951 525) rotate(22)" class="text-[12px] italic fill-[#5f93c6]">Wisła</text>' +
    '<text transform="translate(1151 820) rotate(62)" class="text-[12px] italic fill-[#5f93c6]">Wisła</text>';

  const yellow = [['898',722,572],['898',607,673.7],['633',1111,367],['801',964,442],['637',866,522],['801',1062.7,606],['898',878,610],
    ['637',959,657],['634',1151,670],['637',1144,735],['801',1138,767],['580',805,783],['580',923,798],['719',857,850],['724',1004,853],
    ['629',1266,523],['634',1305,565],['634',1219,615],['637',1457,733],['631',1218,780],['637',1328,775]];
  const red = [['61',928,437.5],['7',939.5,530.7],['S8',1140,493.5],['S8',927.5,628.7],['S8',814.5,746.7],['7',898.5,802.7],['S8',1377.5,449.5]];
  $('shields').innerHTML = yellow.map(([s, x, y]) =>
    `<rect x="${x - 10.5}" y="${y - 5.5}" width="21" height="11" fill="#ffdc3a" stroke="#dcae35"/><text x="${x}" y="${y + 3.3}" text-anchor="middle" class="text-[9.5px] fill-[#4a4427] font-medium">${s}</text>`).join('') +
    red.map(([s, x, y]) => {
      const w = s.length > 1 ? 16 : 11;
      return `<rect x="${x - w / 2}" y="${y - 5.5}" width="${w}" height="11" fill="#d9605f"/><text x="${x}" y="${y + 3.3}" text-anchor="middle" class="text-[9.5px] fill-white font-bold">${s}</text>`;
    }).join('');

  const castle = '<path d="M-4.500 4.500h9v2h-9zM-3 3.500l.6-5.500h4.800l.6 5.500zM-4-6h1.800v1.500h1.300V-6H.9v1.500h1.300V-6H4v3.500h-8z" fill="#fff"/>';
  const museum = '<path d="M0-5.500L5.500-2v1.300h-11V-2zM-5 4h10v1.400H-5zM-4.500 0h1.200v3.500h-1.200zM3.300 0h1.200v3.500H3.300z" fill="#fff"/><path d="M-1.800 3.500V.5L0 2.300 1.800.500v3" fill="none" stroke="#fff"/>';
  const places = [
    [767.5,618,'#10bdf8','<path d="M-.9-6q.9-1.500 1.800 0V-2L6 1.200v1.300L.9 1.200v3L2.500 5.500v1L0 5.800l-2.500.7v-1l1.600-1.300v-3L-6 2.500V1.200L-.9-2z" fill="#fff"/>'],
    [1089.700,669,'#4db648','<g fill="#fff"><ellipse cx="-4.800" cy="-1" rx="1.400" ry="1.900"/><ellipse cx="-1.900" cy="-4" rx="1.400" ry="1.900"/><ellipse cx="1.900" cy="-4" rx="1.400" ry="1.900"/><ellipse cx="4.800" cy="-1" rx="1.400" ry="1.900"/><path d="M0-1c2 0 4 3 4 4.500S2 5 0 5-4 5-4 3.500-2-1 0-1z"/></g>'],
    [1071.5,716.700,'#12b5cb',castle],[972.5,791.7,'#12b5cb',museum],[1110.5,745.500,'#12b5cb',museum],[412.5,377.500,'#4db648','']
  ];
  $('places').innerHTML = places.map(([x, y, c, icon]) =>
    `<g transform="translate(${x} ${y})"><use href="#poi" fill="${c}"/><g transform="translate(0 10)">${icon}</g></g>`).join('') +
    '<path d="M398.500 383v7M400 397l-2 4" stroke="#188038" stroke-width="1.500"/>';

  const spots = [[982.3,577.3],[966.3,717.3],[1107.3,738.3],[1163.3,740.3],[1050.3,776.3],[1066.3,778.3],[986.3,784.3],[1113.3,784.3],[1031.3,793.3],[1094.3,811.3]];
  $('pins').innerHTML = spots.map(([x, y]) => `<use href="#pin" fill="#6991fd" x="${x}" y="${y}"/>`).join('') +
    '<g transform="translate(802.5 416)"><path d="M0 40.500C-1 31-4 28-9 21.500A12.300 12.300 0 1 1 9 21.500C4 28 1 31 0 40.500z" fill="#ea4335" stroke="#d33426" stroke-width=".5"/><circle cy="12.500" r="4.600" fill="#811411"/></g>';
</script>
</body>
</html>
